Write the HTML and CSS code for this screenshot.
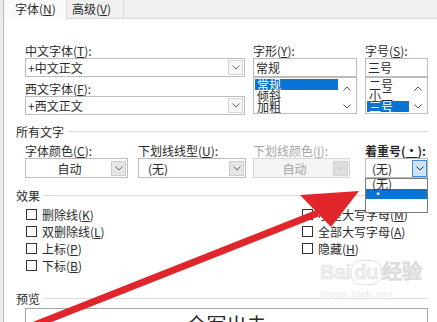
FILE: index.html
```html
<!DOCTYPE html>
<html lang="zh-CN">
<head>
    <meta charset="UTF-8">
    <meta name="viewport" content="width=device-width, initial-scale=1.0">
    <title>字体</title>
    <link rel="stylesheet" href="styles.css">
</head>
<body>

<div class="dialog">
    <div class="tabs">
        <div class="tab active">字体(<u>N</u>)</div>
        <div class="tab">高级(<u>V</u>)</div>
        <div class="tab-rest"></div>
    </div>

    <div class="panel">
        <div class="font-row">
            <div class="col">
                <div class="label">中文字体(<u>T</u>):</div>
                <div class="combo">
                    <span class="value">+中文正文</span>
                    <span class="drop"><svg width="8" height="5" viewBox="0 0 8 5"><path d="M0.5 0.5 L4 4 L7.5 0.5" fill="none" stroke="#666"/></svg></span>
                </div>
                <div class="label gap">西文字体(<u>F</u>):</div>
                <div class="combo">
                    <span class="value">+西文正文</span>
                    <span class="drop"><svg width="8" height="5" viewBox="0 0 8 5"><path d="M0.5 0.5 L4 4 L7.5 0.5" fill="none" stroke="#666"/></svg></span>
                </div>
            </div>

            <div class="col">
                <div class="label">字形(<u>Y</u>):</div>
                <div class="field">常规</div>
                <div class="listbox">
                    <ul class="items">
                        <li class="sel">常规</li>
                        <li>倾斜</li>
                        <li>加粗</li>
                    </ul>
                    <div class="scroll">
                        <svg width="8" height="5" viewBox="0 0 8 5"><path d="M0.5 4.5 L4 1 L7.5 4.5" fill="none" stroke="#555"/></svg>
                        <svg width="8" height="5" viewBox="0 0 8 5"><path d="M0.5 0.5 L4 4 L7.5 0.5" fill="none" stroke="#555"/></svg>
                    </div>
                </div>
            </div>

            <div class="col">
                <div class="label">字号(<u>S</u>):</div>
                <div class="field">三号</div>
                <div class="listbox">
                    <ul class="items">
                        <li>二号</li>
                        <li>小二</li>
                        <li class="sel">三号</li>
                    </ul>
                    <div class="scroll">
                        <svg width="8" height="5" viewBox="0 0 8 5"><path d="M0.5 4.5 L4 1 L7.5 4.5" fill="none" stroke="#555"/></svg>
                        <svg width="8" height="5" viewBox="0 0 8 5"><path d="M0.5 0.5 L4 4 L7.5 0.5" fill="none" stroke="#555"/></svg>
                    </div>
                </div>
            </div>
        </div>

        <div class="group-title"><span>所有文字</span><i></i></div>

        <div class="attr-row">
            <div class="col">
                <div class="label">字体颜色(<u>C</u>):</div>
                <div class="combo c-color">
                    <span class="value center">自动</span>
                    <span class="drop shaded"><svg width="8" height="5" viewBox="0 0 8 5"><path d="M0.5 0.5 L4 4 L7.5 0.5" fill="none" stroke="#666"/></svg></span>
                </div>
            </div>
            <div class="col">
                <div class="label">下划线线型(<u>U</u>):</div>
                <div class="combo c-line">
                    <span class="value indent">(无)</span>
                    <span class="drop shaded"><svg width="8" height="5" viewBox="0 0 8 5"><path d="M0.5 0.5 L4 4 L7.5 0.5" fill="none" stroke="#666"/></svg></span>
                </div>
            </div>
            <div class="col">
                <div class="label disabled">下划线颜色(<u>I</u>):</div>
                <div class="combo c-ucolor off">
                    <span class="value center">自动</span>
                    <span class="drop off"><svg width="8" height="5" viewBox="0 0 8 5"><path d="M0.5 0.5 L4 4 L7.5 0.5" fill="none" stroke="#c4c4c4"/></svg></span>
                </div>
            </div>
            <div class="col menu-host">
                <div class="label strong">着重号(<u>·</u>):</div>
                <div class="combo c-dot">
                    <span class="value small-indent">(无)</span>
                    <span class="drop pressed"><svg width="8" height="5" viewBox="0 0 8 5"><path d="M0.5 0.5 L4 4 L7.5 0.5" fill="none" stroke="#333"/></svg></span>
                </div>
                <ul class="menu">
                    <li>(无)</li>
                    <li class="sel">·</li>
                </ul>
            </div>
        </div>

        <div class="group-title effects"><span>效果</span><i></i></div>

        <div class="checks">
            <div class="check-col">
                <div class="check"><span class="box"></span>删除线(<u>K</u>)</div>
                <div class="check"><span class="box"></span>双删除线(<u>L</u>)</div>
                <div class="check"><span class="box"></span>上标(<u>P</u>)</div>
                <div class="check"><span class="box"></span>下标(<u>B</u>)</div>
            </div>
            <div class="check-col">
                <div class="check"><span class="box"></span>小型大写字母(<u>M</u>)</div>
                <div class="check"><span class="box"></span>全部大写字母(<u>A</u>)</div>
                <div class="check"><span class="box"></span>隐藏(<u>H</u>)</div>
            </div>
        </div>

        <div class="group-title preview-title"><span>预览</span><i></i></div>

        <div class="preview"><span>全军出击</span></div>
    </div>
</div>

<!-- photo watermark -->
<div class="watermark">
    <div class="wm-logo">Bai<span class="paw">du</span>经验</div>
    <div class="wm-url">jingyan.baidu.com</div>
</div>

<!-- red arrow drawn on the screenshot -->
<svg class="arrow" width="437" height="322" viewBox="0 0 437 322">
    <line x1="22" y1="330" x2="318" y2="213" stroke="#e1262b" stroke-width="7"/>
    <polygon points="300,195 359,191 331,227" fill="#e1262b"/>
</svg>

</body>
</html>
```

FILE: styles.css
```css
body {
    margin: 0;
    width: 437px;
    height: 322px;
    overflow: hidden;
    position: relative;
    background-color: #ececec;
    font-family: "Noto Sans CJK SC", sans-serif;
    font-size: 12px;
    color: #2a2a2a;
}

ul {
    list-style: none;
    margin: 0;
    padding: 0;
}

.dialog {
    margin-left: 3px;
    height: 322px;
    border-left: 1px solid #bcbcbc;
    background-color: #fff;
}

.tabs {
    display: flex;
    height: 19px;
    background-color: #f0f0f0;
}

.tab {
    line-height: 18px;
    white-space: nowrap;
}

.tab.active {
    width: 51px;
    padding-left: 11px;
    background-color: #fafafa;
}

.tab:not(.active) {
    width: 51px;
    padding-left: 5px;
    border-left: 1px solid #d9d9d9;
    border-right: 1px solid #d9d9d9;
    border-bottom: 1px solid #d9d9d9;
    height: 18px;
}

.tab-rest {
    flex: 1;
    border-bottom: 1px solid #d9d9d9;
}

.panel {
    padding: 24px 9px 0 12px;
}

.label {
    height: 15px;
    line-height: 15px;
    white-space: nowrap;
}

.label.gap {
    margin-top: 4px;
}

.label.disabled {
    color: #a3a3a3;
}

.label.strong {
    font-weight: 600;
}

.font-row {
    margin-left: 9px;
    display: grid;
    grid-template-columns: 220px 104px 63px;
    column-gap: 8px;
}

.combo {
    box-sizing: border-box;
    height: 19px;
    border: 1px solid #bdbdbd;
    display: flex;
    align-items: center;
    background-color: #fff;
}

.combo .value {
    flex: 1;
    padding-left: 2px;
    line-height: 17px;
    white-space: nowrap;
}

.value.center {
    text-align: center;
}

.value.indent {
    padding-left: 9px;
}

.value.small-indent {
    padding-left: 6px;
}

.drop {
    box-sizing: border-box;
    width: 15px;
    height: 15px;
    margin-right: 1px;
    border: 1px solid #d6d6d6;
    background-color: #f6f6f6;
    display: flex;
    align-items: center;
    justify-content: center;
}

.drop.shaded {
    background-color: #e6e6e6;
    border-color: #cdcdcd;
}

.drop.off {
    background-color: #dedede;
    border-color: #d2d2d2;
}

.drop.pressed {
    height: 17px;
    background-color: #cce4f7;
    border-color: #3d8ee0;
    margin-right: 0;
}

.field {
    box-sizing: border-box;
    height: 19px;
    border: 1px solid #bdbdbd;
    padding-left: 2px;
    line-height: 17px;
}

.listbox {
    box-sizing: border-box;
    height: 37px;
    border: 1px solid #bdbdbd;
    display: flex;
}

.listbox .items {
    flex: 1;
    padding-top: 1px;
}

.listbox li {
    height: 11px;
    line-height: 11px;
    padding-left: 2px;
    margin-left: 1px;
}

.sel {
    background-color: #0a74d4;
    color: #fff;
}

.scroll {
    width: 18px;
    display: flex;
    flex-direction: column;
    align-items: center;
    justify-content: space-between;
    padding: 8px 0 4px;
}

.group-title {
    margin-top: 9px;
    display: flex;
    align-items: center;
    gap: 4px;
    height: 15px;
    line-height: 15px;
}

.group-title i {
    flex: 1;
    height: 1px;
    background-color: #dcdcdc;
}

.group-title.effects {
    margin-top: 10px;
}

.group-title.preview-title {
    margin-top: 17px;
}

.attr-row {
    margin-top: 5px;
    margin-left: 9px;
    display: grid;
    grid-template-columns: 113px 115px 112px 63px;
}

.attr-row .label {
    height: 14px;
    line-height: 14px;
}

.attr-row .combo {
    height: 20px;
}

.c-color { width: 103px; }
.c-line { width: 108px; }
.c-ucolor { width: 97px; }
.c-dot { width: 63px; }

.combo.off {
    background-color: #f4f4f4;
    border-color: #d6d6d6;
    color: #a3a3a3;
}

.menu-host {
    position: relative;
}

.menu {
    position: absolute;
    top: 34px;
    left: 0;
    width: 63px;
    height: 35px;
    box-sizing: border-box;
    border: 1px solid #7a7a7a;
    background-color: #fff;
    z-index: 2;
}

.menu li {
    height: 10px;
    line-height: 10px;
    padding-left: 6px;
}

.checks {
    margin-top: 3px;
    margin-left: 10px;
    display: grid;
    grid-template-columns: 276px 1fr;
}

.check {
    height: 17px;
    display: flex;
    align-items: center;
    white-space: nowrap;
}

.box {
    box-sizing: border-box;
    width: 11px;
    height: 11px;
    border: 1px solid #333;
    margin-right: 5px;
}

.preview {
    margin-top: 2px;
    margin-left: 9px;
    width: 403px;
    height: 15px;
    box-sizing: border-box;
    border: 1px solid #a6a6a6;
    border-bottom: none;
    overflow: hidden;
    text-align: center;
    padding-top: 6px;
}

.preview span {
    display: block;
    font-size: 20px;
    line-height: 20px;
}

.watermark {
    position: absolute;
    left: 320px;
    top: 256px;
    color: #efefef;
    z-index: 1;
}

.wm-logo {
    font-family: "Liberation Sans", sans-serif;
    font-size: 20px;
    font-weight: bold;
    -webkit-text-stroke: 0.5px #dcdcdc;
    white-space: nowrap;
}

.wm-logo .paw {
    display: inline-block;
    border-radius: 10px;
    border: 1px solid #e2e2e2;
    padding: 0 2px;
}

.wm-url {
    font-family: "Liberation Sans", sans-serif;
    font-size: 9px;
    color: #e8e8e8;
    margin-top: 4px;
}

.arrow {
    position: absolute;
    left: 0;
    top: 0;
    z-index: 5;
}
```
